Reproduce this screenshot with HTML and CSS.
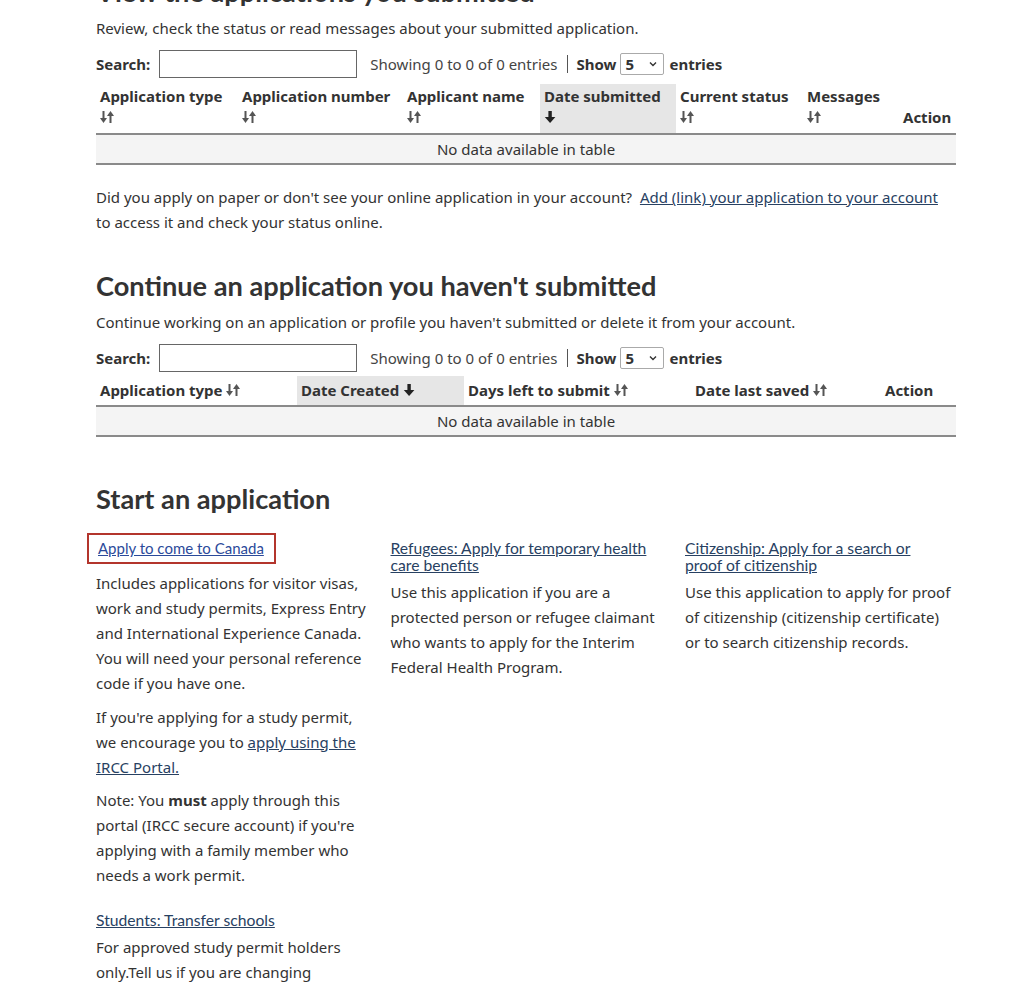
FILE: index.html
```html
<!DOCTYPE html>
<html lang="en">
<head>
    <meta charset="UTF-8">
    <meta name="viewport" content="width=device-width, initial-scale=1.0">
    <title>My applications</title>
    <link rel="stylesheet" href="styles.css">
</head>
<body>
<main class="conteudo">

    <h2 class="titulo primeiro">View the applications you submitted</h2>
    <p class="intro">Review, check the status or read messages about your submitted application.</p>

    <div class="filtros">
        <label class="rotulo">Search:</label>
        <input type="text" class="busca">
        <span class="info">Showing 0 to 0 of 0 entries</span>
        <span class="sep"></span>
        <span class="rotulo">Show</span>
        <span class="qtd">5 <svg width="8" height="6" viewBox="0 0 8 6"><path d="M1 1.5l3 3 3-3" fill="none" stroke="#333" stroke-width="1.4"/></svg></span>
        <span class="rotulo">entries</span>
    </div>

    <table class="tabela">
        <thead>
            <tr>
                <th style="width:142px">Application type<br><svg class="ord" width="14" height="14" viewBox="0 0 14 14"><rect x="2.5" y="1" width="2" height="8"/><polygon points="0,8 7,8 3.5,13"/><rect x="9.5" y="5" width="2" height="8"/><polygon points="7,6 14,6 10.5,1"/></svg></th>
                <th style="width:165px">Application number<br><svg class="ord" width="14" height="14" viewBox="0 0 14 14"><rect x="2.5" y="1" width="2" height="8"/><polygon points="0,8 7,8 3.5,13"/><rect x="9.5" y="5" width="2" height="8"/><polygon points="7,6 14,6 10.5,1"/></svg></th>
                <th style="width:137px">Applicant name<br><svg class="ord" width="14" height="14" viewBox="0 0 14 14"><rect x="2.5" y="1" width="2" height="8"/><polygon points="0,8 7,8 3.5,13"/><rect x="9.5" y="5" width="2" height="8"/><polygon points="7,6 14,6 10.5,1"/></svg></th>
                <th class="ativo" style="width:136px">Date submitted<br><svg class="ord" width="14" height="14" viewBox="0 0 14 14"><rect x="4.4" y="1" width="3.4" height="7"/><polygon points="0.8,7 11.4,7 6.1,13"/></svg></th>
                <th style="width:127px">Current status<br><svg class="ord" width="14" height="14" viewBox="0 0 14 14"><rect x="2.5" y="1" width="2" height="8"/><polygon points="0,8 7,8 3.5,13"/><rect x="9.5" y="5" width="2" height="8"/><polygon points="7,6 14,6 10.5,1"/></svg></th>
                <th style="width:96px">Messages<br><svg class="ord" width="14" height="14" viewBox="0 0 14 14"><rect x="2.5" y="1" width="2" height="8"/><polygon points="0,8 7,8 3.5,13"/><rect x="9.5" y="5" width="2" height="8"/><polygon points="7,6 14,6 10.5,1"/></svg></th>
                <th class="baixo" style="width:57px">Action</th>
            </tr>
        </thead>
        <tbody>
            <tr><td colspan="7" class="vazio">No data available in table</td></tr>
        </tbody>
    </table>

    <p class="aviso-papel">Did you apply on paper or don't see your online application in your account?&nbsp; <a href="#" class="link">Add (link) your application to your account</a> to access it and check your status online.</p>

    <h2 class="titulo">Continue an application you haven't submitted</h2>
    <p class="intro">Continue working on an application or profile you haven't submitted or delete it from your account.</p>

    <div class="filtros segundo">
        <label class="rotulo">Search:</label>
        <input type="text" class="busca">
        <span class="info">Showing 0 to 0 of 0 entries</span>
        <span class="sep"></span>
        <span class="rotulo">Show</span>
        <span class="qtd">5 <svg width="8" height="6" viewBox="0 0 8 6"><path d="M1 1.5l3 3 3-3" fill="none" stroke="#333" stroke-width="1.4"/></svg></span>
        <span class="rotulo">entries</span>
    </div>

    <table class="tabela">
        <thead>
            <tr class="linha-unica">
                <th style="width:201px">Application type <svg class="ord" width="14" height="14" viewBox="0 0 14 14"><rect x="2.5" y="1" width="2" height="8"/><polygon points="0,8 7,8 3.5,13"/><rect x="9.5" y="5" width="2" height="8"/><polygon points="7,6 14,6 10.5,1"/></svg></th>
                <th class="ativo" style="width:167px">Date Created <svg class="ord" width="14" height="14" viewBox="0 0 14 14"><rect x="4.4" y="1" width="3.4" height="7"/><polygon points="0.8,7 11.4,7 6.1,13"/></svg></th>
                <th style="width:227px">Days left to submit <svg class="ord" width="14" height="14" viewBox="0 0 14 14"><rect x="2.5" y="1" width="2" height="8"/><polygon points="0,8 7,8 3.5,13"/><rect x="9.5" y="5" width="2" height="8"/><polygon points="7,6 14,6 10.5,1"/></svg></th>
                <th style="width:190px">Date last saved <svg class="ord" width="14" height="14" viewBox="0 0 14 14"><rect x="2.5" y="1" width="2" height="8"/><polygon points="0,8 7,8 3.5,13"/><rect x="9.5" y="5" width="2" height="8"/><polygon points="7,6 14,6 10.5,1"/></svg></th>
                <th style="width:75px">Action</th>
            </tr>
        </thead>
        <tbody>
            <tr><td colspan="5" class="vazio">No data available in table</td></tr>
        </tbody>
    </table>

    <h2 class="titulo inicio">Start an application</h2>

    <div class="colunas">
        <div class="coluna">
            <h3 class="item"><a href="#" class="item-link destaque">Apply to come to Canada</a></h3>
            <p>Includes applications for visitor visas, work and study permits, Express Entry and International Experience Canada. You will need your personal reference code if you have one.</p>
            <p>If you're applying for a study permit, we encourage you to <a href="#" class="link">apply using the IRCC Portal.</a></p>
            <p>Note: You <strong>must</strong> apply through this portal (IRCC secure account) if you're applying with a family member who needs a work permit.</p>
            <h3 class="item separado"><a href="#" class="item-link">Students: Transfer schools</a></h3>
            <p>For approved study permit holders only.Tell us if you are changing schools.</p>
        </div>
        <div class="coluna">
            <h3 class="item"><a href="#" class="item-link">Refugees: Apply for temporary health care benefits</a></h3>
            <p>Use this application if you are a protected person or refugee claimant who wants to apply for the Interim Federal Health Program.</p>
        </div>
        <div class="coluna">
            <h3 class="item"><a href="#" class="item-link">Citizenship: Apply for a search or proof of citizenship </a></h3>
            <p>Use this application to apply for proof of citizenship (citizenship certificate) or to search citizenship records.</p>
        </div>
    </div>

</main>
</body>
</html>
```

FILE: styles.css
```css
body { margin: 0; background: #fff; color: #333; font-family: "Noto Sans", "DejaVu Sans", sans-serif; font-size: 15px; line-height: 25px; overflow: hidden; }
.conteudo { width: 860px; margin: -25px 0 0 96px; }

.titulo { font-family: Lato, "Liberation Sans", sans-serif; font-weight: bold; font-size: 27.2px; line-height: 34px; margin: 34px 0 7px; color: #333; }
.titulo.primeiro { margin-top: 0; }
.titulo.inicio { margin-top: 45px; margin-bottom: 24px; }
.intro { margin: 0; }

.filtros { display: flex; align-items: center; height: 28px; margin: 9px 0 6px; }
.filtros.segundo { margin: 9px 0 4px; }
.rotulo { font-weight: bold; }
.busca { width: 198px; height: 28px; box-sizing: border-box; border: 1px solid #666; margin: 0 13px 0 9px; padding: 0 4px; font: inherit; }
.info { color: #444; }
.sep { width: 1px; height: 18px; background: #555; margin: 0 9px; }
.qtd { display: flex; align-items: center; justify-content: space-between; width: 44px; height: 22px; box-sizing: border-box; border: 1px solid #aaa; border-radius: 2px; padding: 0 6px 0 4px; margin: 0 5px 0 4px; font-weight: bold; }

.tabela { border-collapse: collapse; width: 860px; table-layout: fixed; }
.tabela th { box-sizing: border-box; text-align: left; vertical-align: top; font-weight: bold; line-height: 21px; padding: 2px 4px 5px; border-bottom: 2px solid #8a8a8a; }
.tabela th.baixo { vertical-align: bottom; }
.tabela th.ativo { background: #e6e6e6; }
.linha-unica th { padding: 4px 4px; }
.ord { fill: #555; vertical-align: -1px; }
.ativo .ord { fill: #222; }
.tabela td { padding: 4px; line-height: 20px; }
.vazio { text-align: center; background: #f4f4f4; border-bottom: 2px solid #8a8a8a; }

.aviso-papel { margin: 20px 0 0; }
.link { color: #284162; text-decoration: underline; }

.colunas { display: grid; grid-template-columns: 271.5px 271.5px 271.5px; column-gap: 23px; }
.coluna p { margin: 0 0 8.5px; }
.item { font-family: Lato, "Liberation Sans", sans-serif; font-size: 15.7px; line-height: 17px; font-weight: normal; margin: 0 0 6px; padding-right: 14px; }
.item.separado { margin-top: 24px; }
.item-link { color: #284162; text-decoration: underline; }
.destaque { display: inline-block; font-size: 15px; color: #2b4a9a; border: 2px solid #b3352c; padding: 5px 10px 5px 9px; margin: -7px 0 1px -9px; }
```
